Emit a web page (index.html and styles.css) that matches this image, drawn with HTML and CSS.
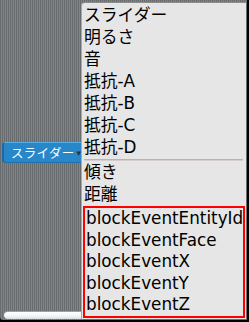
FILE: index.html
```html
<!DOCTYPE html>
<html lang="ja">
<head>
  <meta charset="UTF-8">
  <title>Slider menu</title>
  <link rel="stylesheet" href="styles.css">
</head>
<body>
  <div class="screen">
    <div class="stage">
      <div class="slider-btn">
        <span class="label">スライダー</span>
        <span class="arrow">▾</span>
      </div>
      <div class="scrollbar"></div>
    </div>

    <div class="menu">
      <div class="item">スライダー</div>
      <div class="item">明るさ</div>
      <div class="item">音</div>
      <div class="item">抵抗-A</div>
      <div class="item">抵抗-B</div>
      <div class="item">抵抗-C</div>
      <div class="item">抵抗-D</div>
      <div class="separator"></div>
      <div class="item">傾き</div>
      <div class="item">距離</div>
      <div class="highlight">
        <div class="item">blockEventEntityId</div>
        <div class="item">blockEventFace</div>
        <div class="item">blockEventX</div>
        <div class="item">blockEventY</div>
        <div class="item">blockEventZ</div>
      </div>
    </div>
  </div>
</body>
</html>
```

FILE: styles.css
```css
body {
  margin: 0;
  background: #000;
}
.screen {
  position: relative;
  width: 249px;
  height: 322px;
  overflow: hidden;
}
.stage {
  width: 247px;
  height: 320px;
  box-sizing: border-box;
  padding: 142px 0 1px 2px;
  display: flex;
  flex-direction: column;
  background: repeating-linear-gradient(90deg, #686c6e 0 1px, #818588 1px 2px);
  border-bottom-left-radius: 3px;
}
.slider-btn {
  width: 84px;
  height: 21px;
  box-sizing: border-box;
  display: flex;
  align-items: center;
  padding-left: 7px;
  background: #2887c8;
  border-left: 2px solid #1b6aa8;
  border-top: 1px solid #58aee2;
  border-bottom: 1px solid #1d70ad;
  border-radius: 4px 0 0 4px;
  font-family: "Noto Sans CJK JP", sans-serif;
  font-size: 12.5px;
  letter-spacing: 0.3px;
  color: #fff;
}
.slider-btn .arrow {
  margin-left: 2px;
  font-family: "DejaVu Sans", sans-serif;
  font-size: 9px;
  color: #333;
}
.scrollbar {
  margin-top: auto;
  margin-left: 2px;
  width: 90px;
  height: 8px;
  box-sizing: border-box;
  background: linear-gradient(#ffffff, #f2f4f6 60%, #d8dce0);
  border-top: 1px solid #9aa0a4;
  border-radius: 4px 0 0 4px;
}

/* popup menu */
.menu {
  position: absolute;
  left: 81px;
  top: 2px;
  width: 166px;
  height: 318px;
  box-sizing: border-box;
  padding-top: 1px;
  background: #e6e6e6;
  border-top: 1px solid #8c8c8c;
  border-left: 1px solid #a9a9a9;
  border-right: 1px solid #6b6b6b;
  border-bottom: 1px solid #6b6b6b;
  border-top-left-radius: 4px;
  font-family: "DejaVu Sans", "Noto Sans CJK JP", sans-serif;
  font-size: 16.8px;
  color: #000;
}
.item {
  height: 22px;
  line-height: 22px;
  padding-left: 2px;
  white-space: nowrap;
}
.separator {
  height: 2px;
  margin: 1px 3px 0 2px;
  box-sizing: border-box;
  border-top: 1px solid #c2afb4;
  border-bottom: 1px solid #d6cdd0;
}
.highlight {
  margin: 1px 1px 0 1px;
  border: 2px solid #ff0000;
}
.highlight .item {
  height: 21.6px;
  line-height: 21.6px;
  padding-left: 1px;
}
```
